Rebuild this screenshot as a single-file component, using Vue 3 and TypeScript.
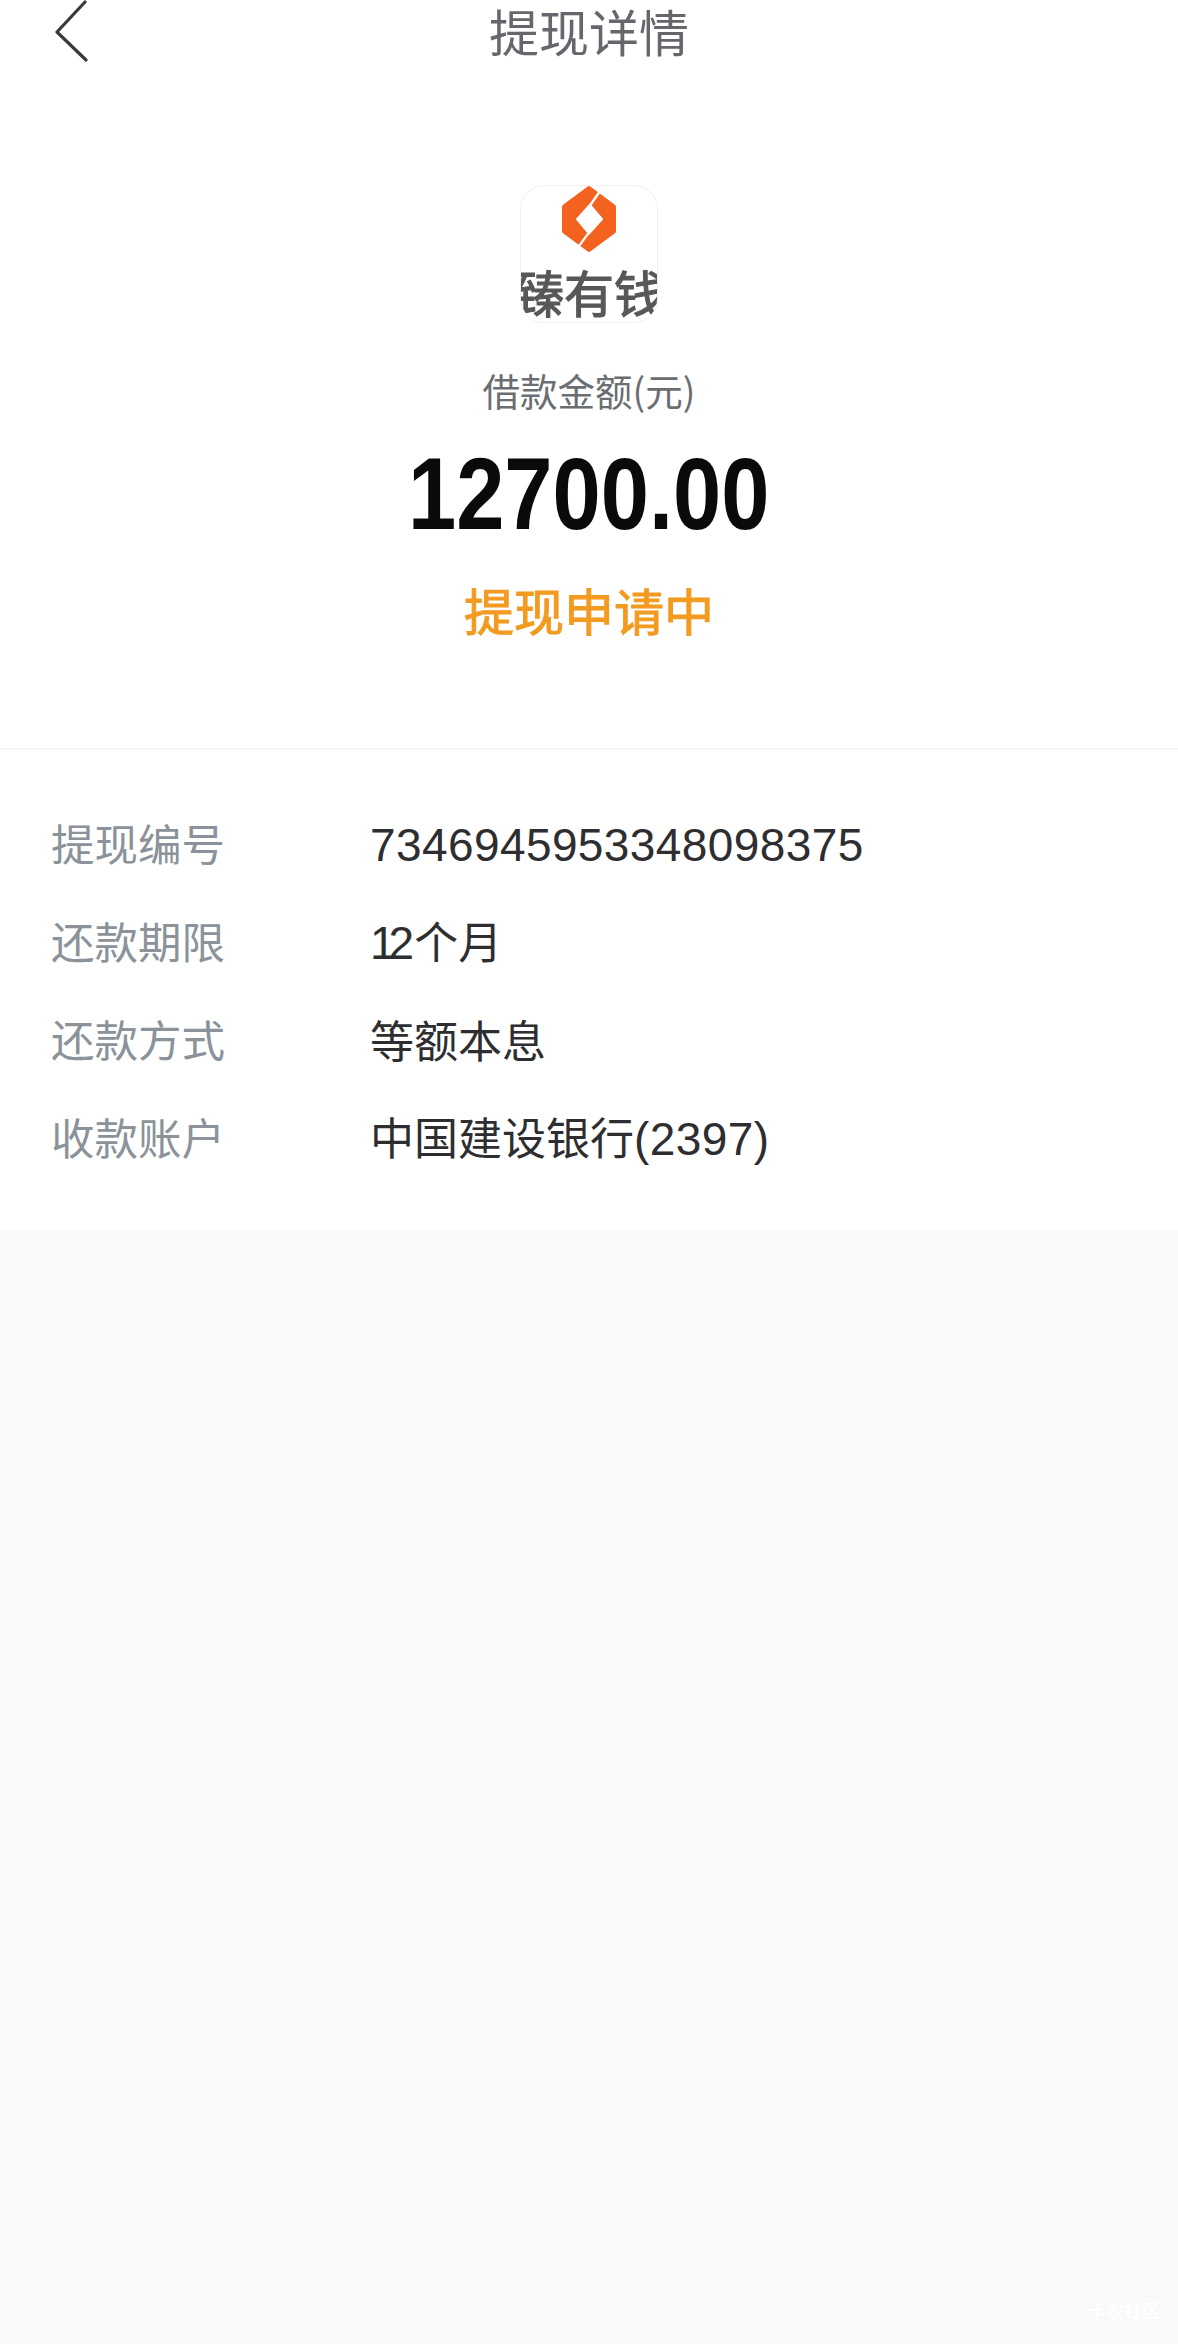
<script setup lang="ts">
interface DetailRow {
  label: string;
  value: string;
}

const rows: DetailRow[] = [
  { label: "提现编号", value: "7346945953348098375" },
  { label: "还款期限", value: "12个月" },
  { label: "还款方式", value: "等额本息" },
  { label: "收款账户", value: "中国建设银行(2397)" },
];

const splitRuns = (value: string): string[] => value.match(/[0-9()]+|[^0-9()]+/g) ?? [];
const isNumeric = (run: string): boolean => /^[0-9()]+$/.test(run);
</script>

<template>
  <div class="page">
    <header class="nav">
      <svg class="nav__back" width="34" height="62" viewBox="0 0 34 62" fill="none">
        <path d="M31 2 L3 32 L32 60" stroke="#3a3a38" stroke-width="3.2" stroke-linecap="round" stroke-linejoin="round" />
      </svg>
      <h1 class="nav__title">提现详情</h1>
      <span></span>
    </header>

    <section class="summary">
      <div class="logo">
        <svg class="logo__mark" width="54" height="66" viewBox="0 0 160 195">
          <path d="M80 8 L152 62 L152 133 L80 187 L8 133 L8 62 Z" fill="#f4621f" stroke="#f4621f" stroke-width="16" stroke-linejoin="round" />
          <path d="M83 54 L120 98 L80 142 L43 98 Z" fill="#fff" stroke="#fff" stroke-width="4" stroke-linejoin="round" />
          <path d="M116 10 L84 56 M78 140 L44 186" stroke="#fff" stroke-width="7" fill="none" />
        </svg>
        <span class="logo__text">臻有钱</span>
      </div>
      <p class="summary__label">借款金额(元)</p>
      <p class="summary__amount">12700.00</p>
      <p class="summary__status">提现申请中</p>
    </section>

    <section class="details">
      <div v-for="row in rows" :key="row.label" class="details__row">
        <span class="details__label">{{ row.label }}</span>
        <span class="details__value">
          <span
            v-for="run in splitRuns(row.value)"
            :key="run"
            :class="{ 'details__num': isNumeric(run), 'details__num--tight': run === '12' }"
          >{{ run }}</span>
        </span>
      </div>
    </section>

    <span class="watermark">卡农社区</span>
  </div>
</template>

<style>
html,
body {
  margin: 0;
  background: #f8f9fb;
}
</style>

<style scoped>
.page {
  position: relative;
  display: flex;
  flex-direction: column;
  width: 1178px;
  height: 2344px;
  overflow: hidden;
  background: #f8f9fb;
  font-family: "Noto Sans CJK SC", "Noto Sans", sans-serif;
}

.nav {
  display: grid;
  grid-template-columns: 1fr auto 1fr;
  align-items: start;
  height: 185px;
  background: #fff;
}

.nav__back {
  margin-left: 54px;
}

.nav__title {
  margin: 0;
  font-size: 50px;
  line-height: 60px;
  font-weight: 400;
  color: #66666c;
}

.summary {
  display: flex;
  flex-direction: column;
  align-items: center;
  height: 565px;
  box-sizing: border-box;
  background: #fff;
  border-bottom: 2px solid #f6f6f6;
}

.summary p {
  margin: 0;
}

.logo {
  display: flex;
  flex-direction: column;
  align-items: center;
  width: 138px;
  height: 138px;
  box-sizing: border-box;
  overflow: hidden;
  border: 1px solid #f1f1f1;
  border-radius: 24px;
}

.logo__mark {
  flex: none;
}

.logo__text {
  flex: none;
  margin-top: 4px;
  font-size: 50px;
  line-height: 70px;
  font-weight: 400;
  -webkit-text-stroke: 1.2px #58585a;
  color: #58585a;
  white-space: nowrap;
}

.summary__label {
  margin-top: 42px !important;
  font-size: 37.5px;
  line-height: 50px;
  color: #6a6e72;
}

.summary__amount {
  margin-top: 24px !important;
  font-family: "Liberation Sans", sans-serif;
  font-size: 102px;
  line-height: 110px;
  font-weight: 700;
  color: #0a0a0a;
  transform: scaleX(0.85);
}

.summary__status {
  margin-top: 27px !important;
  font-size: 50px;
  line-height: 66px;
  font-weight: 400;
  -webkit-text-stroke: 1px #f39a21;
  color: #f39a21;
}

.details {
  display: flex;
  flex-direction: column;
  gap: 22px;
  height: 480px;
  box-sizing: border-box;
  padding: 55px 0 0 51px;
  background: #fff;
}

.details__row {
  display: flex;
  height: 76px;
  align-items: center;
}

.details__label {
  width: 319px;
  font-size: 43.5px;
  line-height: 76px;
  color: #8b9299;
}

.details__value {
  font-size: 44px;
  line-height: 76px;
  color: #2e2e30;
}

.details__num {
  font-family: "Liberation Sans", sans-serif;
  font-size: 46px;
  letter-spacing: 0.4px;
}

.details__num--tight {
  letter-spacing: -7px;
  margin-right: 7px;
}

.watermark {
  position: absolute;
  right: 18px;
  bottom: 21px;
  font-size: 18px;
  font-weight: 700;
  color: #fff;
}
</style>
